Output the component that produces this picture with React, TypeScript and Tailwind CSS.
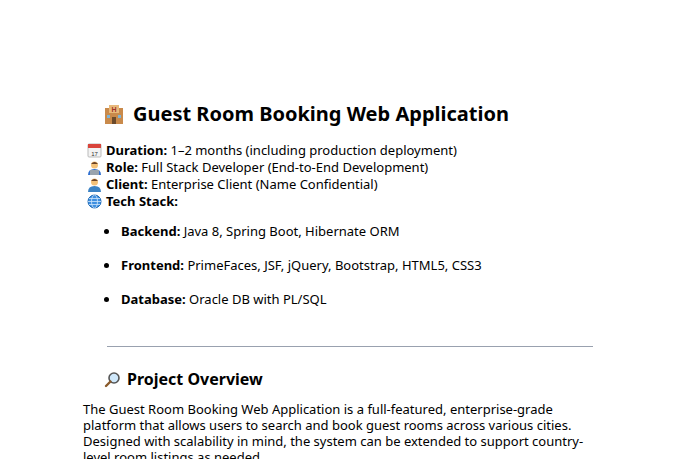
const Icon = ({ kind }: { kind: string }) => {
  if (kind === "hotel")
    return (
      <svg width="22" height="22" viewBox="0 0 22 22">
        <rect x="2" y="5" width="18" height="16" fill="#c98a4b" />
        <rect x="6" y="2" width="10" height="8" fill="#e8b87a" />
        <text x="11" y="9" fontSize="7" fontWeight="bold" textAnchor="middle" fill="#a0342a" fontFamily="Liberation Sans">H</text>
        <rect x="4" y="12" width="3" height="3" fill="#7fb3d5" />
        <rect x="15" y="12" width="3" height="3" fill="#7fb3d5" />
        <rect x="9" y="14" width="4" height="7" fill="#6b4a2b" />
      </svg>
    );
  if (kind === "cal")
    return (
      <svg width="15" height="15" viewBox="0 0 15 15">
        <rect x="1" y="1" width="13" height="13" rx="1" fill="#f3f3f3" stroke="#bbb" />
        <rect x="1" y="1" width="13" height="4" fill="#d9443b" />
        <text x="7.5" y="12.5" fontSize="6" textAnchor="middle" fill="#333" fontFamily="Liberation Sans">17</text>
      </svg>
    );
  if (kind === "dev" || kind === "client")
    return (
      <svg width="15" height="15" viewBox="0 0 15 15">
        <circle cx="7.5" cy="5" r="3.5" fill="#f4c27a" />
        <path d="M4 4 Q7.5 0 11 4" fill="#6b4226" />
        <path d="M1 15 Q1 9 7.5 9 Q14 9 14 15Z" fill={kind === "dev" ? "#2f6fd0" : "#3b82c4"} />
        {kind === "dev" && <rect x="3" y="10" width="9" height="5" fill="#9aa4ad" />}
      </svg>
    );
  return (
    <svg width="15" height="15" viewBox="0 0 15 15">
      <circle cx="7.5" cy="7.5" r="6.5" fill="#3e8fe0" stroke="#1f6bb8" />
      <ellipse cx="7.5" cy="7.5" rx="3" ry="6.5" fill="none" stroke="#cfe6fb" strokeWidth="0.8" />
      <path d="M1 7.5H14M2 4.5H13M2 10.5H13" stroke="#cfe6fb" strokeWidth="0.8" />
    </svg>
  );
};

const meta = [
  { icon: "cal", label: "Duration:", text: "1–2 months (including production deployment)" },
  { icon: "dev", label: "Role:", text: "Full Stack Developer (End-to-End Development)" },
  { icon: "client", label: "Client:", text: "Enterprise Client (Name Confidential)" },
  { icon: "globe", label: "Tech Stack:", text: "" },
];

const stack = [
  { label: "Backend:", text: "Java 8, Spring Boot, Hibernate ORM" },
  { label: "Frontend:", text: "PrimeFaces, JSF, jQuery, Bootstrap, HTML5, CSS3" },
  { label: "Database:", text: "Oracle DB with PL/SQL" },
];

export default function App() {
  return (
    <div className="h-[459px] w-[680px] overflow-hidden bg-white pl-[83px] pt-[101px] font-['Liberation_Sans',Arial,sans-serif] text-[13px] text-black">
      <h1 className="flex items-center gap-2 pl-[20px] text-[20px] font-bold leading-[26px]">
        <Icon kind="hotel" />
        Guest Room Booking Web Application
      </h1>
      <ul className="mt-[15px] flex flex-col leading-[17px]">
        {meta.map((m) => (
          <li key={m.label} className="flex items-center gap-[4px] pl-[4px]">
            <Icon kind={m.icon} />
            <span>
              <b>{m.label}</b> {m.text}
            </span>
          </li>
        ))}
      </ul>
      <ul className="mt-[13px] flex flex-col gap-[17px] pl-[21px] leading-[17px]">
        {stack.map((s) => (
          <li key={s.label} className="flex items-center gap-[12px]">
            <span className="h-[5px] w-[5px] rounded-full bg-black" />
            <span>
              <b>{s.label}</b> {s.text}
            </span>
          </li>
        ))}
      </ul>
      <hr className="mr-[87px] ml-[24px] mt-[38px] border-t border-gray-400" />
      <h2 className="mt-[22px] flex items-center gap-[6px] pl-[21px] text-[16px] font-bold leading-[20px]">
        <svg width="17" height="17" viewBox="0 0 17 17">
          <circle cx="10" cy="7" r="5" fill="#cfe8fb" stroke="#555" strokeWidth="1.6" />
          <path d="M6.5 10.5L2 15" stroke="#8a5a2b" strokeWidth="2.4" strokeLinecap="round" />
        </svg>
        Project Overview
      </h2>
      <p className="mt-[12px] w-[510px] leading-[16px]">
        The Guest Room Booking Web Application is a full-featured, enterprise-grade platform that allows users to search and book guest rooms across various cities. Designed with scalability in mind, the system can be extended to support country-level room listings as needed.
      </p>
    </div>
  );
}
